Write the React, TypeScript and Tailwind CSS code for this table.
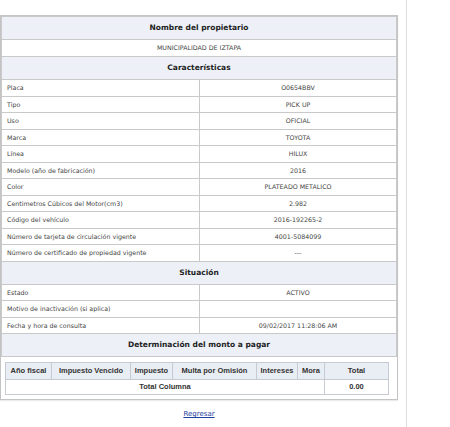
const caracteristicas: [string, string][] = [
  ["Placa", "O0654BBV"],
  ["Tipo", "PICK UP"],
  ["Uso", "OFICIAL"],
  ["Marca", "TOYOTA"],
  ["Línea", "HILUX"],
  ["Modelo (año de fabricación)", "2016"],
  ["Color", "PLATEADO METALICO"],
  ["Centimetros Cúbicos del Motor(cm3)", "2.982"],
  ["Código del vehículo", "2016-192265-2"],
  ["Número de tarjeta de circulación vigente", "4001-5084099"],
  ["Número de certificado de propiedad vigente", "---"],
];

const situacion: [string, string][] = [
  ["Estado", "ACTIVO"],
  ["Motivo de inactivación (si aplica)", ""],
  ["Fecha y hora de consulta", "09/02/2017 11:28:06 AM"],
];

const montoCols = [
  { label: "Año fiscal", w: "w-[46px]" },
  { label: "Impuesto Vencido", w: "w-[79px]" },
  { label: "Impuesto", w: "w-[42px]" },
  { label: "Multa por Omisión", w: "w-[84px]" },
  { label: "Intereses", w: "w-[41px]" },
  { label: "Mora", w: "w-[27px]" },
];

function SectionHeader({ title }: { title: string }) {
  return (
    <tr className="h-[23px] bg-[#edf0f7]">
      <td colSpan={2} className="border border-[#c9c9c9] text-center font-bold text-[7.5px] text-[#222]">
        {title}
      </td>
    </tr>
  );
}

function DataRow({ label, value }: { label: string; value: string }) {
  return (
    <tr className="h-[16.5px]">
      <td className="w-[198px] border border-[#c9c9c9] pl-[5px] text-[6.3px] text-[#444]">{label}</td>
      <td className="border border-[#c9c9c9] text-center text-[6.3px] text-[#444]">{value}</td>
    </tr>
  );
}

export default function App() {
  return (
    <div className="relative h-[427px] w-[450px] bg-white font-['DejaVu_Sans',sans-serif]">
      <div className="flex h-full">
        <div className="w-[407px] border-r border-[#dcdcdc] pt-[15px]">
          <div className="w-[398px] border border-[#c4c4c4] shadow-[0_1px_1px_rgba(0,0,0,0.08)]">
            <table className="w-full border-collapse">
              <tbody>
                <SectionHeader title="Nombre del propietario" />
                <tr className="h-[17px]">
                  <td colSpan={2} className="border border-[#c9c9c9] text-center text-[6.3px] text-[#444]">
                    MUNICIPALIDAD DE IZTAPA
                  </td>
                </tr>
                <SectionHeader title="Características" />
                {caracteristicas.map(([l, v]) => (
                  <DataRow key={l} label={l} value={v} />
                ))}
                <SectionHeader title="Situación" />
                {situacion.map(([l, v]) => (
                  <DataRow key={l} label={l} value={v} />
                ))}
                <SectionHeader title="Determinación del monto a pagar" />
              </tbody>
            </table>
            <div className="px-[4px] pt-[5px] pb-[4px]">
              <table className="w-[384px] border-collapse font-['Liberation_Sans',sans-serif] text-[7.5px] text-[#333]">
                <thead>
                  <tr className="h-[17px] bg-[#e9edf4]">
                    {montoCols.map((c) => (
                      <th key={c.label} className={`${c.w} border border-[#c5cad3] font-bold`}>
                        {c.label}
                      </th>
                    ))}
                    <th className="border border-[#c5cad3] font-bold">Total</th>
                  </tr>
                </thead>
                <tbody>
                  <tr className="h-[15px]">
                    <td colSpan={6} className="border border-[#c5cad3] text-center font-bold">
                      Total Columna
                    </td>
                    <td className="border border-[#c5cad3] text-center font-bold">0.00</td>
                  </tr>
                </tbody>
              </table>
            </div>
          </div>
          <div className="mt-[9px] w-[398px] text-center text-[7px] leading-[10px]">
            <a href="#" className="text-[#1f3f9e] underline">
              Regresar
            </a>
          </div>
        </div>
      </div>
    </div>
  );
}
